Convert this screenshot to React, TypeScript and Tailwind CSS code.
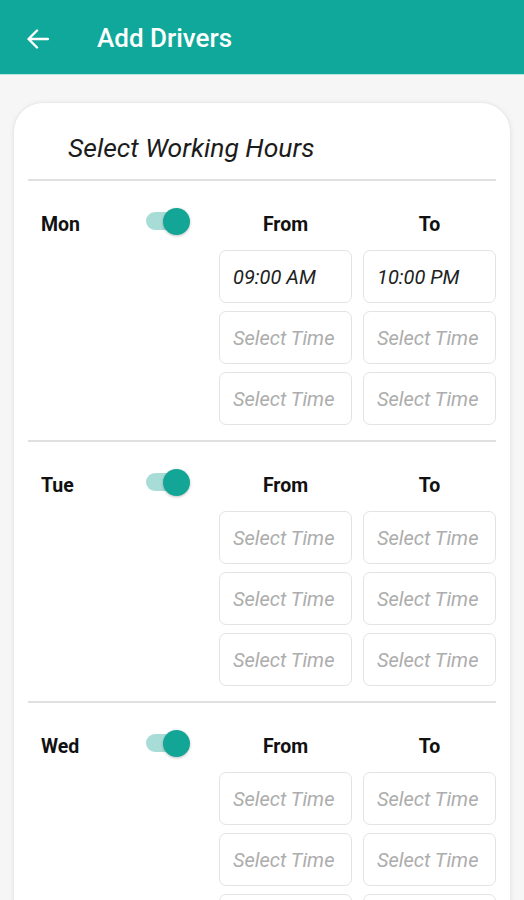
import React from "react";

type Slot = { from?: string; to?: string };

const days: { label: string; slots: Slot[] }[] = [
  { label: "Mon", slots: [{ from: "09:00 AM", to: "10:00 PM" }, {}, {}] },
  { label: "Tue", slots: [{}, {}, {}] },
  { label: "Wed", slots: [{}, {}, {}] },
];

const TimeBox = ({ value }: { value?: string }) => (
  <div className="h-[53px] rounded-[7px] border-[1.5px] border-[#e3e3e3] bg-white flex items-center pl-[13px] text-[20px] italic leading-none">
    {value ? (
      <span className="text-[#222]">{value}</span>
    ) : (
      <span className="text-[#adadad]">Select Time</span>
    )}
  </div>
);

const Toggle = () => (
  <div className="relative w-[44px] h-[28px] flex items-center -translate-y-[2px]">
    <div className="absolute left-0 w-[38px] h-[18px] rounded-full bg-[#a8ddd7]" />
    <div className="absolute right-0 w-[27px] h-[27px] rounded-full bg-[#13a596] shadow-[0_1px_3px_rgba(0,0,0,0.25)]" />
  </div>
);

const DaySection = ({ label, slots }: { label: string; slots: Slot[] }) => (
  <div className="flex pt-[26px] pb-[15px]">
    <div className="w-[191px] shrink-0 flex items-start">
      <div className="h-8 flex items-center justify-between w-full pl-[13px] pr-[29px]">
        <span className="text-[19.5px] font-bold text-[#111] pt-[4px]">{label}</span>
        <Toggle />
      </div>
    </div>
    <div className="flex-1 grid grid-cols-2 gap-x-[11px]">
      <div className="h-8 flex items-center justify-center pt-[4px] text-[19.5px] font-bold text-[#111]">From</div>
      <div className="h-8 flex items-center justify-center pt-[4px] text-[19.5px] font-bold text-[#111]">To</div>
      <div className="col-span-2 grid grid-cols-2 gap-x-[11px] gap-y-[8px] mt-[11px]">
        {slots.map((s, i) => (
          <React.Fragment key={i}>
            <TimeBox value={s.from} />
            <TimeBox value={s.to} />
          </React.Fragment>
        ))}
      </div>
    </div>
  </div>
);

export default function App() {
  return (
    <div
      className="w-[524px] h-[900px] overflow-hidden bg-[#f6f6f6]"
      style={{ fontFamily: "Roboto, 'Noto Sans', sans-serif" }}
    >
      {/* App bar */}
      <div className="h-[74px] bg-[#0fa89a] flex items-center pt-[3px]">
        <svg className="ml-[27px]" width="22" height="20" viewBox="0 0 22 20" fill="none">
          <path d="M21 10H2M10 1.5L1.5 10l8.5 8.5" stroke="white" strokeWidth="2.4" strokeLinecap="round" strokeLinejoin="round" />
        </svg>
        <span className="ml-[48px] text-[26px] font-medium text-white">Add Drivers</span>
      </div>
      <div className="h-px bg-[#b9e6e1]" />

      {/* Card */}
      <div className="mx-[13px] mt-[27px] rounded-t-[30px] bg-white border border-[#eaeaea] shadow-[0_1px_5px_rgba(0,0,0,0.08)] px-[14px] h-[820px]">
        <div className="pt-[30px] pl-[40px] text-[26.5px] italic leading-[30px] text-[#1c1c1c]">
          Select Working Hours
        </div>
        <div className="mt-[16px] h-[2px] bg-[#e0e0e0]" />
        {days.map((d) => (
          <div key={d.label}>
            <DaySection label={d.label} slots={d.slots} />
            <div className="h-[2px] bg-[#e0e0e0]" />
          </div>
        ))}
      </div>
    </div>
  );
}
